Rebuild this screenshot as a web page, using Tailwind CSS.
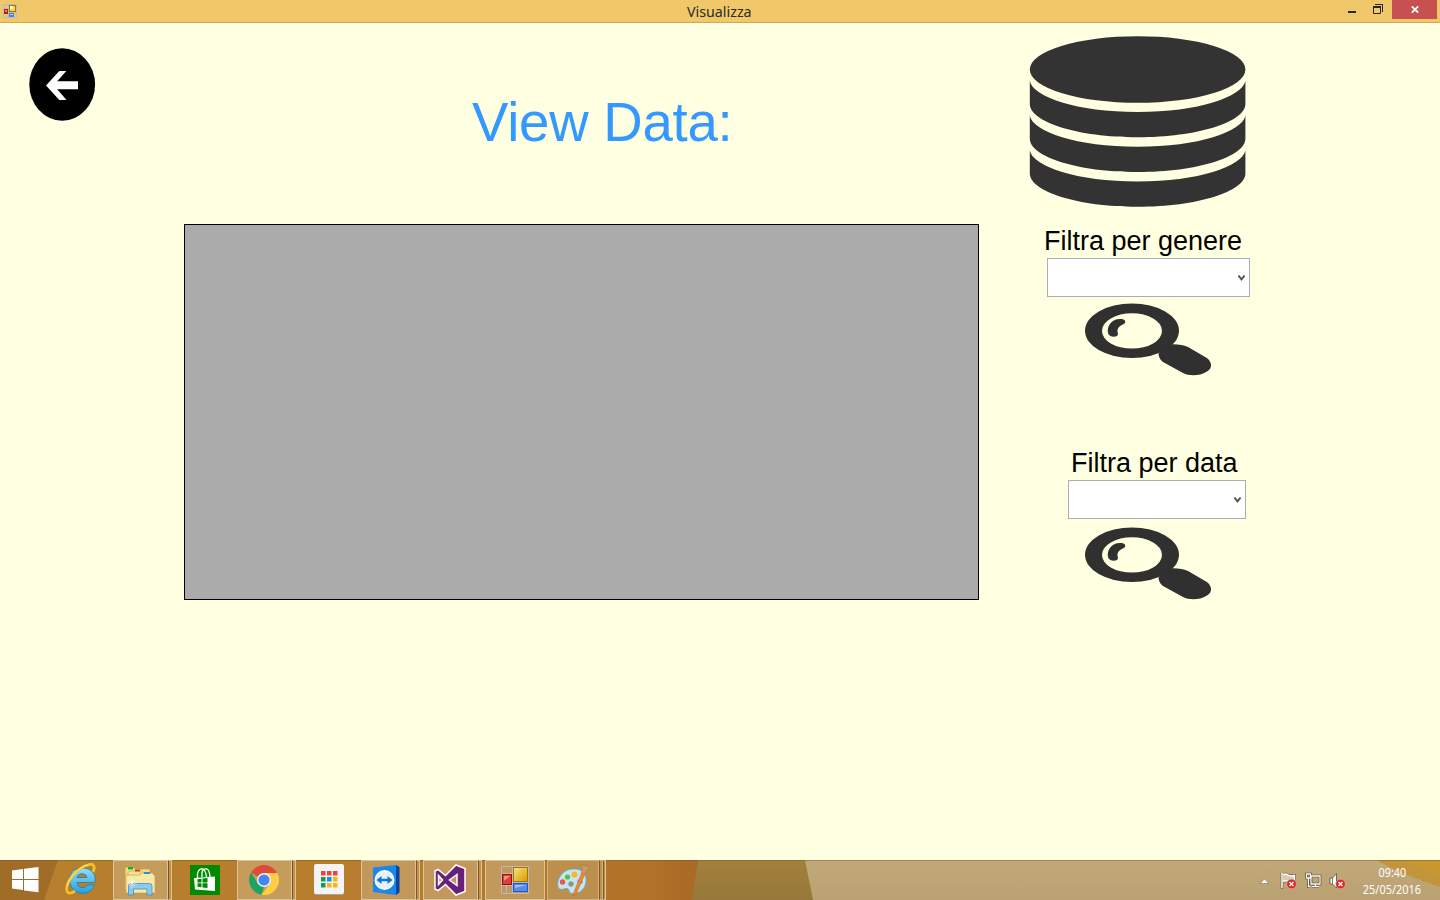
<!DOCTYPE html>
<html lang="it">
<head>
<meta charset="utf-8">
<title>Visualizza</title>
<script src="https://cdn.jsdelivr.net/npm/@tailwindcss/browser@4"></script>
</head>
<body class="flex h-screen w-full flex-col overflow-hidden bg-[#ffffe1] font-['Liberation_Sans',Arial,sans-serif]">

<!-- Title bar -->
<header class="flex h-[23px] shrink-0 items-start justify-between border-b border-[#d0a855] bg-[#f0c869] font-['Noto_Sans',sans-serif]">
  <div class="w-[108px] pt-1 pl-[3px]">
    <svg class="h-[14px] w-[14px]" viewBox="0 0 14 14">
      <path d="M.5 .5h5v13h-5zM.5 4.500h5M5.500 8.500h8v5h-8zM5.500 .5h8v8h-8z" fill="none" stroke="#b9bcc4"/>
      <rect x="1" y="5" width="4" height="5" fill="#b81c18"/><rect x="2" y="6" width="2" height="2" fill="#f08070"/>
      <rect x="6.500" y="1.500" width="6" height="6" fill="#f9d848" stroke="#a87400"/><rect x="7" y="2" width="3" height="3" fill="#fff2b0"/>
      <rect x="6" y="9" width="5" height="4" fill="#4a80e8"/><rect x="7" y="10" width="3" height="1" fill="#b0ccff"/>
    </svg>
  </div>
  <span class="-translate-x-px scale-x-[.97] text-[14.700px] leading-[23px] text-[#2b2b2b]">Visualizza</span>
  <div class="flex w-[108px] justify-end pr-[3px]">
    <svg class="h-[19px] w-[45px]" viewBox="0 0 45 19"><rect x="1" y="11" width="8" height="2" fill="#262626"/><path d="M26.500 6.500h7v7h-7z" fill="none" stroke="#262626"/><path d="M26 6h8v2h-8zM28 4h8v1h-8zM35 4h1v8h-1z" fill="#262626"/></svg>
    <div class="flex h-[19px] w-[45px] items-center justify-center bg-[#c75050]">
      <svg class="h-[7px] w-2" viewBox="0 0 8 7"><path d="M.8 .3 7.200 6.700M7.200 .3 .8 6.700" stroke="#fff" stroke-width="1.700"/></svg>
    </div>
  </div>
</header>

<!-- Form -->
<main class="flex min-h-0 flex-1 items-start">
  <div class="w-[184px] shrink-0 pt-[25px] pl-[29px]">
    <svg class="h-[73px] w-[67px]" viewBox="0 0 67 73">
      <ellipse cx="33.200" cy="36.500" rx="32.900" ry="36.200"/>
      <path d="M17 37.500 30.300 23H37.300L28.200 33.200H49V41.200H28.200L37.500 52H30.300Z" fill="#fff"/>
    </svg>
  </div>

  <section class="flex w-[795px] shrink-0 flex-col">
    <h1 class="h-[201px] pt-[69px] pl-[288px] text-[54.600px] leading-[62px] tracking-[-.25px] whitespace-nowrap text-[#3399ff]">View Data:</h1>
    <div class="h-[376px] border border-black bg-[#ababab]"></div>
  </section>

  <aside class="flex flex-col pt-[13px] pl-[50px]">
    <svg class="h-[172px] w-[218px]" viewBox="0 0 218 172" fill="#333">
      <ellipse cx="108.600" cy="33.500" rx="107.800" ry="33.300"/>
      <path id="disk" d="M.8 45C4 61 48 76 108.600 76S213 61 216.400 45V68C216.400 86 168 101.300 108.600 101.300S.8 86 .8 68Z"/>
      <use href="#disk" y="34.700"/>
      <use href="#disk" y="69.400"/>
    </svg>
    <label class="mt-[17px] pl-[15px] text-[27px] leading-[32px] whitespace-nowrap">Filtra per genere</label>
    <div class="mt-[1px] ml-[18px] flex h-[39px] w-[203px] items-center justify-end border border-[#abadb3] bg-white pr-1">
      <svg class="h-[6px] w-[7px]" viewBox="0 0 7 6"><path d="M.4 .5 3.500 4.400 6.600 .5" fill="none" stroke="#555" stroke-width="1.900"/></svg>
    </div>
    <svg class="mt-[6px] ml-14 h-[74px] w-[127px]" viewBox="0 0 127 74" fill="#303030">
      <g id="lens">
        <path fill-rule="evenodd" d="M47 .5A47 27.300 0 1 1 47 55.100A47 27.300 0 1 1 47 .5ZM47 10.200A30 17.700 0 1 0 47 45.600A30 17.700 0 1 0 47 10.200Z"/>
        <path d="M73.700 50 86 41.400Q96 41 103 44L121 54.500C127 58 128 65 122 68.500C114 73.500 104 73 98 70L78 59Q73 55 73.700 50Z"/>
        <path d="M36.500 16C41 16.600 41.500 20 38 21.500C33 23.500 31.500 27 33 30.500C33.500 35 24 35 23 30C21.500 23 27 15 36.500 16Z"/>
      </g>
    </svg>
    <label class="mt-[70px] pl-[42px] text-[27px] leading-[32px] whitespace-nowrap">Filtra per data</label>
    <div class="mt-[1px] ml-[39px] flex h-[39px] w-[178px] items-center justify-end border border-[#abadb3] bg-white pr-1">
      <svg class="h-[6px] w-[7px]" viewBox="0 0 7 6"><path d="M.4 .5 3.500 4.400 6.600 .5" fill="none" stroke="#555" stroke-width="1.900"/></svg>
    </div>
    <svg class="mt-2 ml-14 h-[74px] w-[127px]" viewBox="0 0 127 74" fill="#303030"><use href="#lens"/></svg>
  </aside>
</main>

<!-- Taskbar -->
<footer class="relative flex h-10 shrink-0 justify-between">
  <svg class="absolute inset-0 -z-10 h-10 w-[1440px]" viewBox="0 0 1440 40">
    <defs>
      <linearGradient id="g1"><stop offset="0" stop-color="#b5802f"/><stop offset=".5" stop-color="#b77d2c"/><stop offset=".93" stop-color="#b27229"/><stop offset="1" stop-color="#a96826"/></linearGradient>
      <linearGradient id="g2" x2="0" y2="1"><stop offset="0" stop-color="#c2a979"/><stop offset="1" stop-color="#b9a173"/></linearGradient>
      <linearGradient id="g3" x2="0" y2="1"><stop offset="0" stop-color="#a2803d"/><stop offset="1" stop-color="#97783a"/></linearGradient>
    </defs>
    <rect width="700" height="40" fill="url(#g1)"/>
    <path d="M0 0H58L44 40H0Z" fill="#a06d28"/>
    <path d="M698 0H806L814 40H692Z" fill="url(#g3)"/>
    <path d="M805 0H1440V40H813Z" fill="url(#g2)"/>
    <path d="M1376 0H1440V27Q1410 18 1376 0Z" fill="#c2953c"/>
    <path d="M1400 0H1440V17Q1420 10 1400 0Z" fill="#c99730"/>
    <path d="M0 .5H1440" stroke="#705018" stroke-opacity=".4"/>
  </svg>

  <nav class="flex h-10">
    <div class="w-[50px] pt-[6px] pl-[11px]">
      <svg class="h-7 w-7" viewBox="0 0 28 28" fill="#fff"><path d="M1 4.500 12 3V13H1ZM13 2.800 27.500 1V13H13ZM1 14H12V24L1 22.600ZM13 14H27.500V26.200L13 24.400Z"/></svg>
    </div>
    <div class="w-[63px] pt-[3px] pl-[15px]">
      <svg class="h-8 w-8" viewBox="0 0 32 32">
        <defs><linearGradient id="ie" x2="0" y2="1"><stop offset="0" stop-color="#8fe0fc"/><stop offset="1" stop-color="#24a0de"/></linearGradient></defs>
        <path d="M30 19.500H12C12.500 25.500 20 26 22.500 22H29.500C26 31 17 32 11 28.500C1 22 3 7 14 5.500C24 3.500 31.500 9 30 19.500ZM12 14.500H22C21.500 9.500 12.500 9.500 12 14.500Z" fill="url(#ie)" stroke="#187fb5" stroke-width=".8" fill-rule="evenodd"/>
        <path d="M28 9C31 3 28 0 23 2C14 4 4 15 2 23C.5 30 4 32 10 28" fill="none" stroke="#f5c02c" stroke-width="2.800"/>
        <path d="M23 1.700C14 4 4 15 2 23" fill="none" stroke="#ffe77e" stroke-width="1"/>
      </svg>
    </div>

    <div class="flex w-[62px]">
      <div class="flex w-[55px] items-center border border-[#dfc394] bg-[#c69c5c] pl-[10px]">
        <svg class="h-8 w-8" viewBox="0 0 32 32">
          <path d="M1 5Q1 3 3 3H9L11 5H26V26H1Z" fill="#f3dc84" stroke="#c39b43" stroke-width=".7"/><rect x="4" y="3" width="5" height="2.500" fill="#18b33a"/>
          <path d="M8 7H18L20 9H29V27H4V8Z" fill="#f8e59a" stroke="#c9a14a" stroke-width=".6"/><rect x="11" y="5.500" width="5" height="2" fill="#d63c24"/>
          <path d="M16 9H28L31 12V29H2V11H16Z" fill="#f9e9a6" stroke="#c9a14a" stroke-width=".7"/><rect x="20" y="8" width="6" height="2" fill="#2b8fe0"/>
          <path d="M4.500 31V22Q4.500 19.500 7 19.500H25.500Q28 19.500 28 22V31H23V25H9.500V31Z" fill="#8ccbed" stroke="#428fc0" stroke-width=".8"/>
          <path d="M8 14V24M3 19H13M5 16 11 22M11 16 5 22" stroke="#fff" stroke-opacity=".8" stroke-width=".7"/>
        </svg>
      </div>
      <div class="w-[4px] border-y border-r border-l border-y-[#dfc394] border-r-[#dfc394] border-l-[#825420] bg-[#bd9150]"></div>
    </div>

    <div class="w-[62px] pt-[5px] pl-[15px]">
      <svg class="h-[30px] w-[30px]" viewBox="0 0 30 30">
        <rect width="30" height="30" fill="#008a00"/>
        <path d="M4 13 25 11.500V26L5 24.500Z" fill="#fff"/>
        <path d="M7.500 13V8.500Q9 3 13 4Q15.500 5 16.500 12M12 12V7.500Q13 3 17 4Q19.500 5 20 12" fill="none" stroke="#fff" stroke-width="1.300"/>
        <path d="M7.500 14.200 11.500 13.700V17.500H7.500ZM12.500 13.500 17.500 12.900V17.500H12.500ZM7.500 18.300H11.500V22.200L7.500 21.700ZM12.500 18.300H17.500V23L12.500 22.400Z" fill="#008a00"/>
      </svg>
    </div>

    <div class="flex w-[62px]">
      <div class="flex w-[55px] items-center border border-[#dfc394] bg-[#c69c5c] pl-[11px]">
        <svg class="h-[30px] w-[30px]" viewBox="0 0 30 30">
          <path d="M15 15 2.100 7.500A15 15 0 0 1 28 7.500Z" fill="#dc4b3e"/>
          <path d="M2.100 7.500 8.900 18.500 15 22 12.500 29.800A15 15 0 0 1 2.100 7.500Z" fill="#1da462"/>
          <path d="M15 8H28.200A15 15 0 0 1 12.500 29.800L21.500 18Z" fill="#ffce43"/>
          <circle cx="15" cy="15" r="7" fill="#f4f4f4"/><circle cx="15" cy="15" r="5.600" fill="#4586f3"/>
        </svg>
      </div>
      <div class="w-[4px] border-y border-r border-l border-y-[#dfc394] border-r-[#dfc394] border-l-[#825420] bg-[#bd9150]"></div>
    </div>

    <div class="w-[62px] pt-1 pl-[15px]">
      <svg class="h-[31px] w-[30px]" viewBox="0 0 30 31">
        <rect y="1" width="30" height="30" rx="2" fill="#a4a4a4"/><rect width="30" height="30" rx="2" fill="#f4f4f4"/>
        <path d="M7 7h4.500v4.500H7zM13 7h4.500v4.500H13zM19 7h4.500v4.500H19z" fill="#e8453c"/>
        <path d="M7 13h4.500v4.500H7zM7 19h4.500v4.500H7z" fill="#139b5a"/><path d="M13 13h4.500v4.500H13z" fill="#1a8cf0"/>
        <path d="M19 13h4.500v4.500H19zM13 19h4.500v4.500H13zM19 19h4.500v4.500H19z" fill="#fbb510"/>
      </svg>
    </div>

    <div class="flex w-[62px]">
      <div class="flex w-[55px] items-center border border-[#dfc394] bg-[#c2995b] pl-[10px]">
        <svg class="h-[32px] w-[29px]" viewBox="0 0 29 32">
          <path d="M1 3.500 24 1V31L1 28Z" fill="#1688ee"/><path d="M24 1 27.500 3V28.500L24 31Z" fill="#07429c"/>
          <ellipse cx="12.500" cy="16" rx="10" ry="10" fill="#fff"/><ellipse cx="12.500" cy="16" rx="8.500" ry="8.600" fill="#e5f2fc"/>
          <path d="M4.500 16 9.500 12V14.700H15.500V12L20.500 16 15.500 20V17.300H9.500V20Z" fill="#1273d6"/>
        </svg>
      </div>
      <div class="w-[4px] border-y border-r border-l border-y-[#dfc394] border-r-[#dfc394] border-l-[#825420] bg-[#bd9150]"></div>
    </div>

    <div class="flex w-[62px]">
      <div class="flex w-[55px] items-center border border-[#dfc394] bg-[#c2995b] pl-[10px]">
        <svg class="h-[32px] w-[32px]" viewBox="0 0 32 32">
          <path fill-rule="evenodd" d="M22 1 31 4.500V27.500L22 31 11.500 20.500 4 26.500 1 25V7L4 5.500 11.500 11.500ZM23 10.500 15.500 16 23 21.500ZM4.500 11.500V20.500L8.500 16Z" fill="#68217a" stroke="#fff" stroke-width="1.500"/>
        </svg>
      </div>
      <div class="w-[4px] border-y border-r border-l border-y-[#dfc394] border-r-[#dfc394] border-l-[#825420] bg-[#bd9150]"></div>
    </div>

    <div class="flex w-[62px]">
      <div class="flex w-[60px] items-center justify-center border border-[#dfc394] bg-[#c2995b]">
        <svg class="h-[28px] w-[28px]" viewBox="0 0 28 28">
          <defs><linearGradient id="yl" x2="1" y2="1"><stop offset="0" stop-color="#f9e478"/><stop offset="1" stop-color="#d79b00"/></linearGradient></defs>
          <path d="M.5 .5h27v27h-27zM.5 7.500h11M.5 19.500h11M11.500 .5v27M11.500 16.500h16M5.500 19.500v8" fill="none" stroke="#b8bbc4"/>
          <rect x="1.500" y="8.500" width="9" height="10" fill="#dc4038" stroke="#9a1010"/><path d="M3 10h6L3 15Z" fill="#f29088"/>
          <rect x="12.500" y="1.500" width="14" height="14" fill="url(#yl)" stroke="#a97600"/>
          <rect x="12.500" y="17.500" width="14" height="8" fill="#568bf0" stroke="#2454c0"/><path d="M14 19h11L14 22Z" fill="#9dc0ff"/>
        </svg>
      </div>
    </div>

    <div class="flex w-[62px]">
      <div class="flex w-[52px] items-center border border-[#d4b27e] bg-[#bd8f4d] pl-[9px]">
        <svg class="h-[32px] w-[32px]" viewBox="0 0 32 32">
          <path d="M1 23C-1 15 6 5 16 5C25 4 30 10 29 18C28 26 22 30 15 29.500C11 29 13 24 9 24.500C6 25 3 27 1 23Z" fill="#c5e4f2" stroke="#5fa5c4" stroke-width=".8"/>
          <circle cx="14" cy="20" r="2.300" fill="#b98b4b" stroke="#5a9bb8" stroke-width=".8"/>
          <circle cx="5.500" cy="18" r="2.700" fill="#e8584a"/><circle cx="10.500" cy="13" r="2.600" fill="#55c14a"/><circle cx="17.500" cy="10.500" r="3" fill="#f6b823"/><circle cx="23" cy="17.500" r="2.600" fill="#5a9ee6"/>
          <path d="M25 8 28 10 19 30 16 32 17 28Z" fill="#ee8a2a" stroke="#b8611a" stroke-width=".5"/>
          <path d="M24.500 9C25 6 26 5 24 0L29 2 32 2.500C32 6 29 6 28 10.500Z" fill="#c79965" stroke="#9a6f42" stroke-width=".4"/>
        </svg>
      </div>
      <div class="w-[4px] border-y border-r border-l border-y-[#d4b27e] border-r-[#d4b27e] border-l-[#825420] bg-[#bd9150]"></div>
      <div class="w-[3px] border-y border-r border-l border-y-[#dfc394] border-r-[#dfc394] border-l-[#825420] bg-[#bd9150]"></div>
    </div>
  </nav>

  <div class="flex h-10 items-start">
    <svg class="mt-[18px] mr-[11px] h-[6px] w-[9px]" viewBox="0 0 9 6"><path d="M.3 5.500 4.500 .8 8.700 5.500Z" fill="#fff" stroke="#75603c" stroke-width=".5"/></svg>
    <svg class="mt-3 mr-2 h-[18px] w-[17px]" viewBox="0 0 17 18">
      <path d="M2 1V16.500M3 2.500Q6 1.500 8 3T14.500 3.500V10Q11 11 8.500 9.500T3 9.500Z" fill="#fff" fill-opacity=".35" stroke="#5c4a2d" stroke-width="2.600"/>
      <path d="M2 1V16M3 2.500Q6 1.500 8 3T14.500 3.500V10Q11 11 8.500 9.500T3 9.500" fill="#d9ccb1" stroke="#fff" stroke-width="1.500"/>
      <g id="bad"><circle cx="11.500" cy="12" r="4.800" fill="#dc2525" stroke="#f2b0a5" stroke-width=".6"/><path d="M9.500 10 13.500 14M13.500 10 9.500 14" stroke="#fff" stroke-width="1.500"/></g>
    </svg>
    <svg class="mt-3 mr-[7px] h-[18px] w-[17px]" viewBox="0 0 17 18" fill="none">
      <path d="M6 4H15V12H6ZM10.500 12V14.500M7 14.500H14M1.500 2H5.500V6H1.500ZM3.500 6V14.500H5" stroke="#4d3c22" stroke-width="2.600"/>
      <path d="M6 4H15V12H6ZM10.500 12V14.500M7 14.500H14M1.500 2H5.500V6H1.500ZM3.500 6V14.500H5" stroke="#fff" stroke-width="1.300"/>
    </svg>
    <svg class="mt-3 h-[18px] w-[17px]" viewBox="0 0 17 18">
      <path d="M1 6H3.500L7.500 1.500V16L3.500 12H1Z" fill="#fff" stroke="#5c4a2d" stroke-width=".8"/><path d="M3.500 6V12" stroke="#8d7a58"/>
      <use href="#bad"/>
    </svg>
    <div class="ml-[7px] flex w-[78px] flex-col items-center pt-[4px] font-['Noto_Sans',sans-serif] text-[12px] leading-[17px] text-white">
      <span class="scale-x-[.9]">09:40</span>
      <span class="scale-x-[.91]">25/05/2016</span>
    </div>
    <div class="w-[9px]"></div>
  </div>
</footer>
</body>
</html>
